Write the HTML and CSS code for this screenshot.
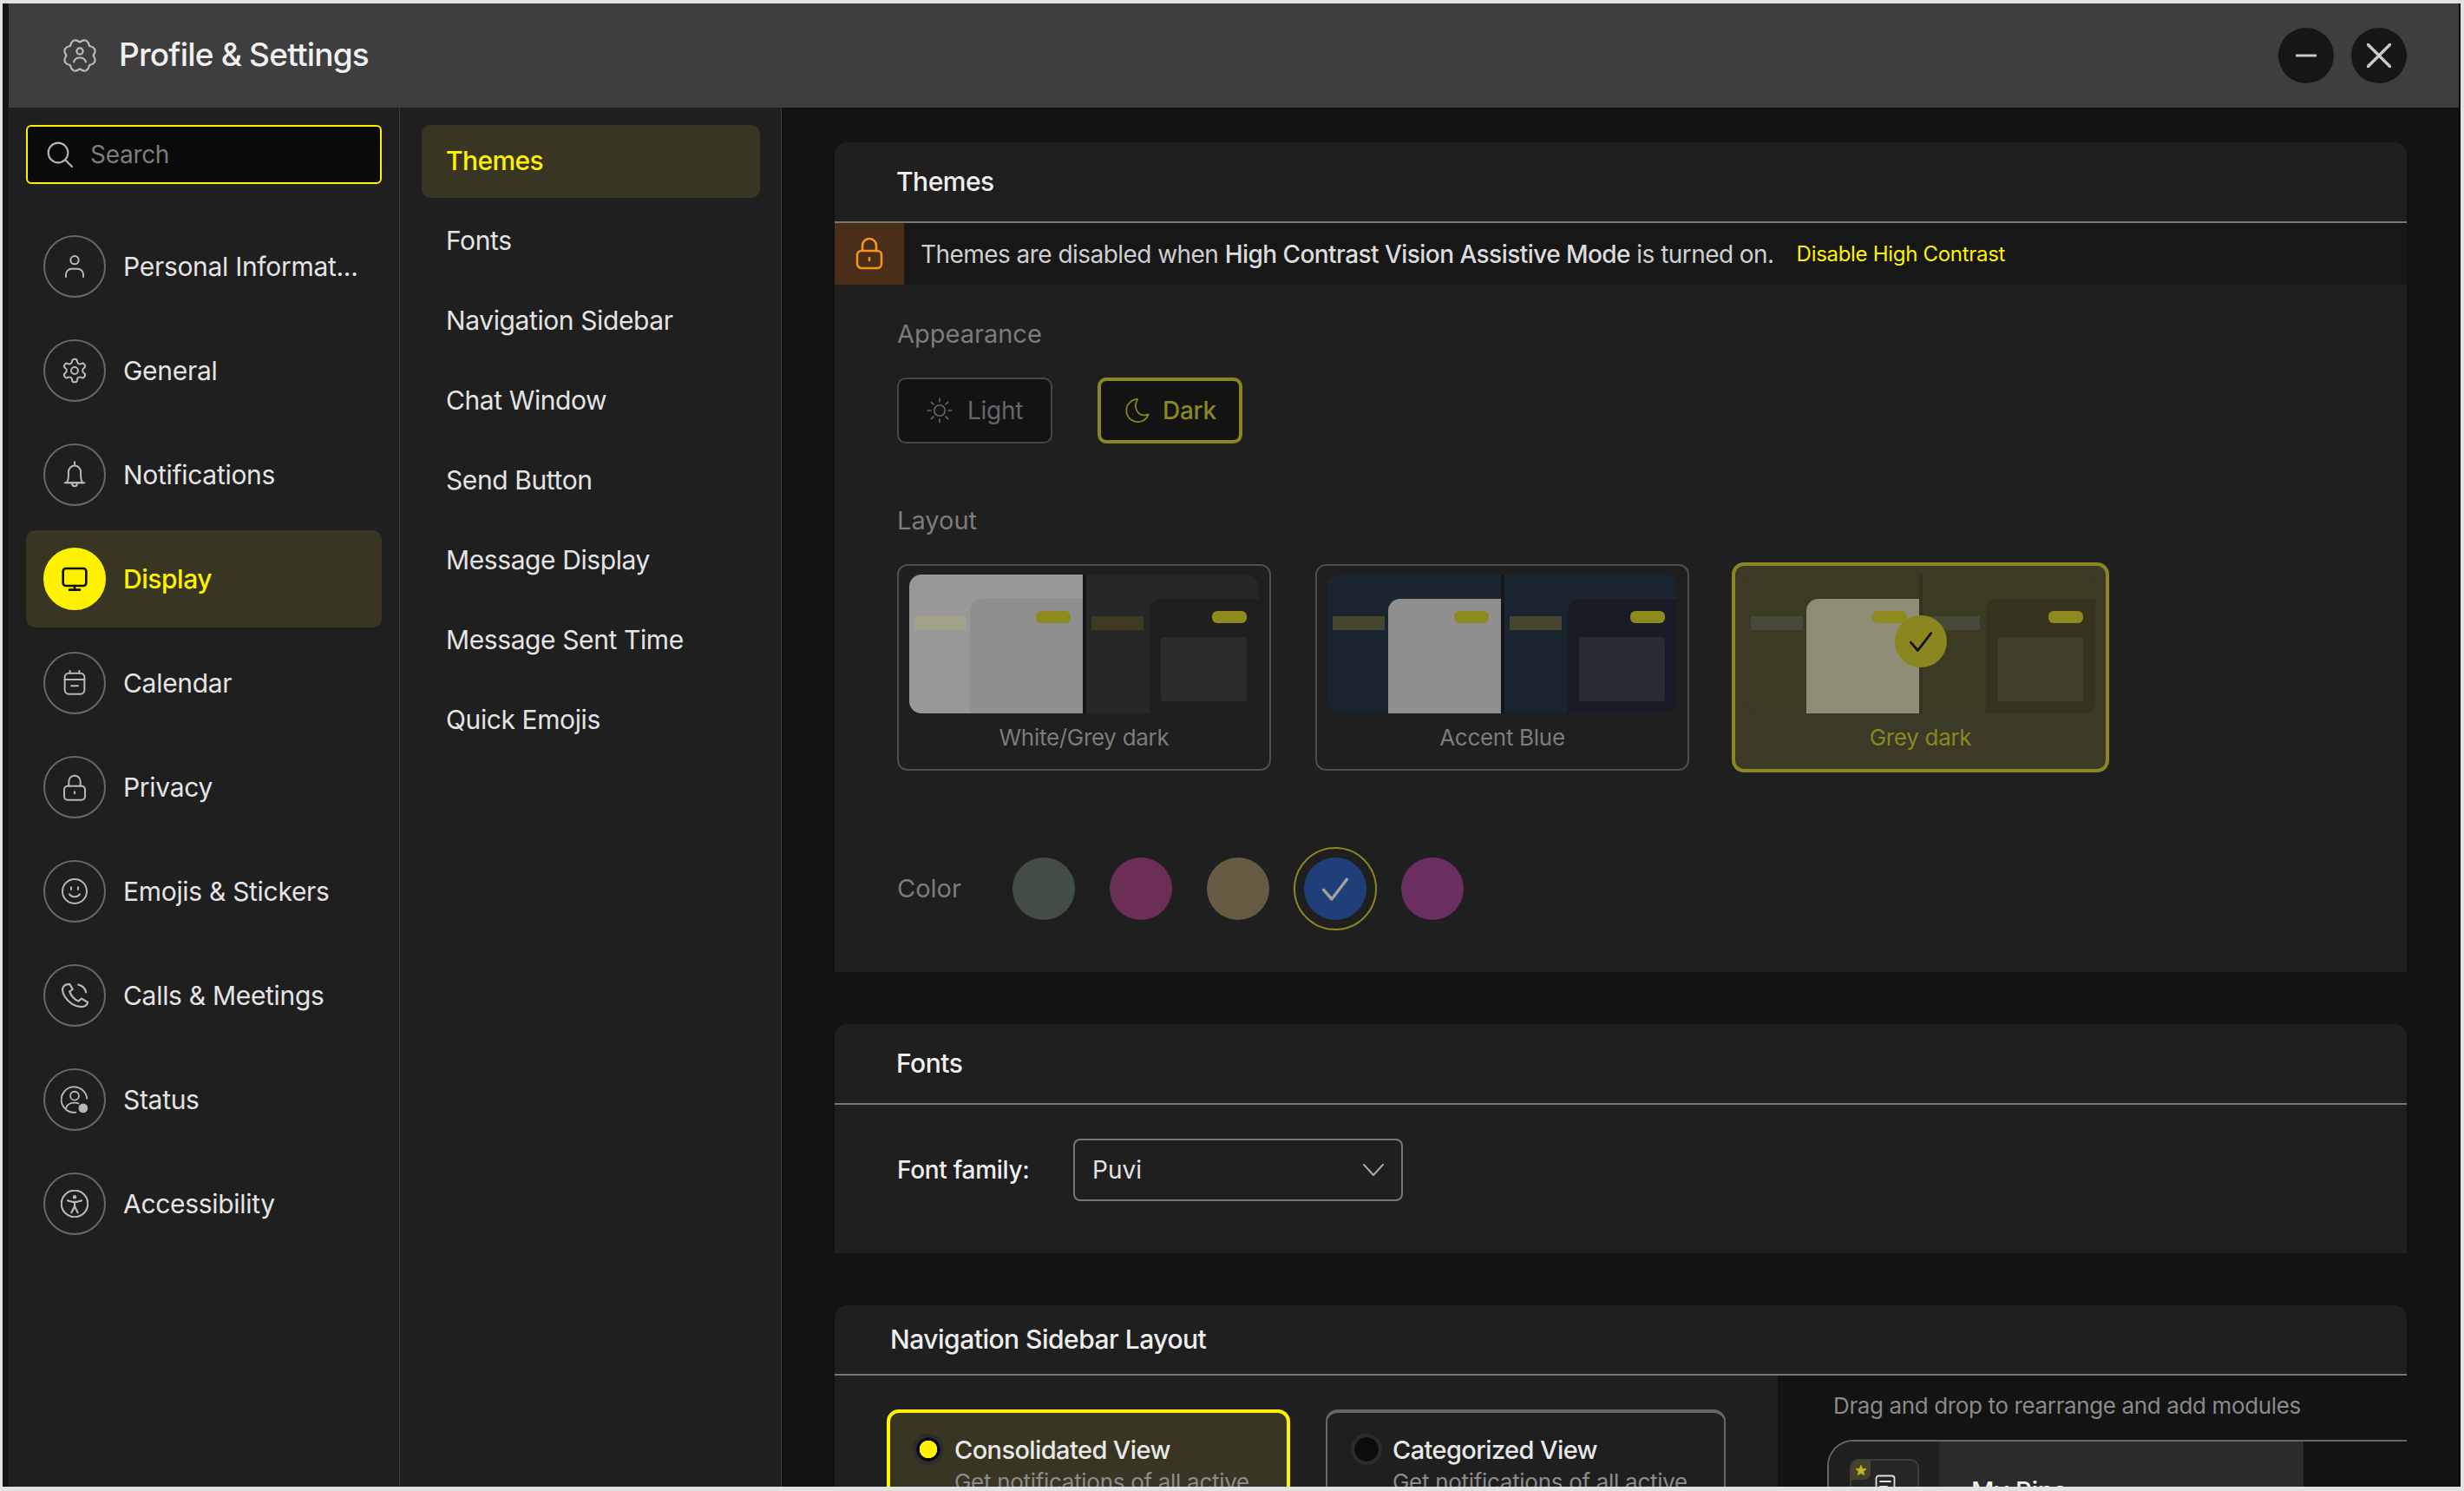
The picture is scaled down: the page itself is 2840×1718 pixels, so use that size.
FILE: index.html
```html
<!DOCTYPE html>
<html lang="en">
<head>
    <meta charset="UTF-8">
    <title>Profile &amp; Settings</title>
    <link rel="stylesheet" href="styles.css">
</head>
<body>
<div class="window">
    <header class="titlebar">
        <svg class="title-icon" viewBox="0 0 40 40"><path d="M35.5 20Q41.2 28.8 31 31Q28.8 41.2 20 35.5Q11.2 41.2 9 31Q-1.2 28.8 4.5 20Q-1.2 11.2 9 9Q11.2 -1.2 20 4.5Q28.8 -1.2 31 9Q41.2 11.2 35.5 20Z"/><circle cx="20" cy="15" r="3.6"/><path d="M13 27.5c1-3.5 4-5 7-5s6 1.5 7 5"/></svg>
        <h1>Profile &amp; Settings</h1>
        <div class="win-buttons">
            <button class="win-btn"><svg viewBox="0 0 24 24"><path d="M1 12h22"/></svg></button>
            <button class="win-btn win-close"><svg viewBox="0 0 24 24"><path d="M1 1l22 22M23 1L1 23"/></svg></button>
        </div>
    </header>
    <div class="columns">
        <aside class="sidebar">
            <div class="search">
                <svg viewBox="0 0 24 24"><circle cx="10.5" cy="10.5" r="8.5"/><path d="M17 17l5.5 5.5"/></svg>
                <span>Search</span>
            </div>
            <nav class="nav">
                <a class="nav-item"><span class="nav-circle"><svg viewBox="0 0 24 24"><circle cx="12" cy="6.5" r="3.5"/><path d="M4.5 21v-2a5 5 0 0 1 5-5h5a5 5 0 0 1 5 5v2"/></svg></span>Personal Informat...</a>
                <a class="nav-item"><span class="nav-circle"><svg viewBox="0 0 24 24"><path d="M12.22 2h-.44a2 2 0 0 0-2 2v.18a2 2 0 0 1-1 1.73l-.43.25a2 2 0 0 1-2 0l-.15-.08a2 2 0 0 0-2.73.73l-.22.38a2 2 0 0 0 .73 2.73l.15.1a2 2 0 0 1 1 1.72v.51a2 2 0 0 1-1 1.74l-.15.09a2 2 0 0 0-.73 2.73l.22.38a2 2 0 0 0 2.73.73l.15-.08a2 2 0 0 1 2 0l.43.25a2 2 0 0 1 1 1.73V20a2 2 0 0 0 2 2h.44a2 2 0 0 0 2-2v-.18a2 2 0 0 1 1-1.73l.43-.25a2 2 0 0 1 2 0l.15.08a2 2 0 0 0 2.73-.73l.22-.39a2 2 0 0 0-.73-2.73l-.15-.08a2 2 0 0 1-1-1.74v-.5a2 2 0 0 1 1-1.74l.15-.09a2 2 0 0 0 .73-2.73l-.22-.38a2 2 0 0 0-2.73-.73l-.15.08a2 2 0 0 1-2 0l-.43-.25a2 2 0 0 1-1-1.73V4a2 2 0 0 0-2-2z"/><circle cx="12" cy="12" r="3"/></svg></span>General</a>
                <a class="nav-item"><span class="nav-circle"><svg viewBox="0 0 24 24"><path d="M12 1v2.200M5 19c1-1.500 1.700-3 1.700-5.500v-4a5.300 5.300 0 0 1 10.600 0v4c0 2.500.7 4 1.700 5.500z"/><path d="M3.500 19h17M9.800 19.500c0 3.200 4.400 3.200 4.400 0"/></svg></span>Notifications</a>
                <a class="nav-item active"><span class="nav-circle"><svg viewBox="0 0 24 24"><rect x="2" y="3" width="20" height="15" rx="2.500"/><path d="M12 18v3.500M7.500 21.500h9"/></svg></span>Display</a>
                <a class="nav-item"><span class="nav-circle"><svg viewBox="0 0 24 24"><rect x="3.500" y="3.500" width="17" height="18" rx="3.500"/><path d="M3.500 9h17M9 14.500h6M8 1.500v2M16 1.500v2"/></svg></span>Calendar</a>
                <a class="nav-item"><span class="nav-circle"><svg viewBox="0 0 24 24"><rect x="3" y="11" width="18" height="12" rx="3"/><path d="M7 11V7a5 5 0 0 1 10 0v4M12 16v1.500"/></svg></span>Privacy</a>
                <a class="nav-item"><span class="nav-circle"><svg viewBox="0 0 24 24"><circle cx="12" cy="12" r="10.500"/><path d="M7.500 14.500c2 3 7 3 9 0M9 8.500v2M15 8.500v2"/></svg></span>Emojis &amp; Stickers</a>
                <a class="nav-item"><span class="nav-circle"><svg viewBox="1 1 22 22"><path d="M5 3.500C2 5 1.500 8 4 12.500c3 5 8 8.500 13 8.500 3 0 5-1.500 5.500-3.500l-5-3-2.500 2c-3-1-6-4.500-7-7.500l2.500-2L8 3z"/><path d="M15 3.500c3 .5 5.500 3 6 6"/></svg></span>Calls &amp; Meetings</a>
                <a class="nav-item"><span class="nav-circle"><svg viewBox="1 1 26 26"><path d="M25.500 13A12 12 0 1 0 15 26"/><circle cx="14" cy="10.500" r="4"/><path d="M6 22c1-3.500 4-5 8-5 1.500 0 2.500.2 3.500.6"/><circle cx="22" cy="22" r="3.600" fill="currentColor"/></svg></span>Status</a>
                <a class="nav-item"><span class="nav-circle"><svg viewBox="1 1 22 22"><circle cx="12" cy="12" r="10.500"/><circle cx="12" cy="6.700" r=".8"/><path d="M6.500 9.500l3.500 1h4l3.500-1M12 10.500v3.500M12 14l-2.500 5M12 14l2.500 5"/></svg></span>Accessibility</a>
            </nav>
        </aside>
        <aside class="subnav">
            <a class="subnav-item active">Themes</a>
            <a class="subnav-item">Fonts</a>
            <a class="subnav-item">Navigation Sidebar</a>
            <a class="subnav-item">Chat Window</a>
            <a class="subnav-item">Send Button</a>
            <a class="subnav-item">Message Display</a>
            <a class="subnav-item">Message Sent Time</a>
            <a class="subnav-item">Quick Emojis</a>
        </aside>
        <main class="content">
            <section class="panel">
                <h2 class="panel-title">Themes</h2>
                <div class="banner">
                    <span class="banner-icon"><svg viewBox="0 0 32 38"><rect x="2" y="15" width="28" height="20" rx="5"/><path d="M8 15V9a8 8 0 0 1 16 0v6M16 23v3"/></svg></span>
                    <p>Themes are disabled when <b>High Contrast Vision Assistive Mode</b> is turned on.</p>
                    <a>Disable High Contrast</a>
                </div>
                <div class="panel-body">
                    <div class="label">Appearance</div>
                    <div class="modes">
                        <button class="mode"><svg viewBox="0 0 24 24"><circle cx="12" cy="12" r="5"/><path d="M12 1v3M12 20v3M1 12h3M20 12h3M4.300 4.300l2 2M17.700 17.700l2 2M4.300 19.700l2-2M17.700 6.300l2-2"/></svg>Light</button>
                        <button class="mode selected"><svg viewBox="0 0 24 24"><path d="M13 1.500a10.500 10.500 0 1 0 10 14C14 19 8 10 13 1.500z"/></svg>Dark</button>
                    </div>
                    <div class="label layout-label">Layout</div>
                    <div class="themes">
                        <div class="theme white-grey">
                            <div class="preview">
                                <div class="half light"><span class="chip"></span><div class="pane"><span class="pill"></span></div></div>
                                <div class="half dark"><span class="chip"></span><div class="pane"><span class="pill"></span><span class="inner"></span></div></div>
                            </div>
                            <div class="theme-name">White/Grey dark</div>
                        </div>
                        <div class="theme accent-blue">
                            <div class="preview">
                                <div class="half light"><span class="chip"></span><div class="pane"><span class="pill"></span></div></div>
                                <div class="half dark"><span class="chip"></span><div class="pane"><span class="pill"></span><span class="inner"></span></div></div>
                            </div>
                            <div class="theme-name">Accent Blue</div>
                        </div>
                        <div class="theme grey-dark selected">
                            <div class="preview">
                                <div class="half light"><span class="chip"></span><div class="pane"><span class="pill"></span></div></div>
                                <div class="half dark"><span class="chip"></span><div class="pane"><span class="pill"></span><span class="inner"></span></div></div>
                            </div>
                            <div class="theme-name">Grey dark</div>
                            <span class="theme-check"><svg viewBox="0 0 24 24"><path d="M2 13l7 8L22 4"/></svg></span>
                        </div>
                    </div>
                    <div class="colors">
                        <div class="label color-label">Color</div>
                        <span class="swatch c1"></span>
                        <span class="swatch c2"></span>
                        <span class="swatch c3"></span>
                        <span class="swatch-ring"><span class="swatch c4"><svg viewBox="0 0 24 24"><path d="M2 13l7 8L22 4"/></svg></span></span>
                        <span class="swatch c5"></span>
                    </div>
                </div>
            </section>
            <section class="panel">
                <h2 class="panel-title">Fonts</h2>
                <div class="font-row">
                    <label>Font family:</label>
                    <div class="select"><span>Puvi</span><svg viewBox="0 0 24 24"><path d="M1 6l11 12L23 6"/></svg></div>
                </div>
            </section>
            <section class="panel nav-panel">
                <h2 class="panel-title">Navigation Sidebar Layout</h2>
                <div class="nav-layout">
                    <div class="nav-options">
                        <div class="option selected">
                            <div class="option-head"><span class="radio"></span>Consolidated View</div>
                            <p>Get notifications of all active</p>
                        </div>
                        <div class="option">
                            <div class="option-head"><span class="radio"></span>Categorized View</div>
                            <p>Get notifications of all active</p>
                        </div>
                    </div>
                    <div class="nav-arrange">
                        <div class="arrange-hint">Drag and drop to rearrange and add modules</div>
                        <div class="arrange-box">
                            <div class="arrange-rail">
                                <div class="module">
                                    <span class="module-star"><svg viewBox="0 0 24 24"><path d="M12 2l3 7 7.500.6-5.700 4.900 1.800 7.300L12 18l-6.600 3.800 1.800-7.300L1.500 9.600 9 9z"/></svg></span>
                                    <svg class="module-doc" viewBox="0 0 24 30"><rect x="1.500" y="1.500" width="21" height="27" rx="3"/><path d="M6 8h12M6 14h8"/></svg>
                                </div>
                            </div>
                            <div class="arrange-list">My Pins</div>
                            <div class="arrange-rest"></div>
                        </div>
                    </div>
                </div>
            </section>
        </main>
    </div>
</div>
</body>
</html>
```
FILE: styles.css
```css
* {
    box-sizing: border-box;
}
html, body {
    height: 100%;
}
body {
    margin: 0;
    background-color: #e2e2e2;
    font-family: "Inter", "Liberation Sans", sans-serif;
    color: #e6e6e6;
    overflow: hidden;
}
svg {
    fill: none;
    stroke: currentColor;
    stroke-linecap: round;
    stroke-linejoin: round;
    display: block;
}
.window {
    margin: 4px 4px 0 3px;
    height: 1709px;
    border-left: 7px solid #141414;
    border-right: 2px solid #000;
    display: flex;
    flex-direction: column;
    overflow: hidden;
    background-color: #121212;
}

/* title bar */
.titlebar {
    height: 120px;
    flex: none;
    background-color: #3e3e3e;
    display: flex;
    align-items: center;
    padding-left: 62px;
    padding-right: 60px;
}
.title-icon {
    width: 40px;
    height: 40px;
    color: #bcbcbc;
    stroke-width: 2.200;
}
h1 {
    margin: 0 0 3px 25px;
    font-size: 37px;
    font-weight: 500;
    color: #f0f0f0;
    letter-spacing: -0.8px;
}
.win-buttons {
    margin-left: auto;
    display: flex;
    gap: 20px;
}
.win-btn {
    width: 64px;
    height: 64px;
    border: none;
    padding: 0;
    border-radius: 50%;
    background-color: #161616;
    color: #c8c8c8;
    display: flex;
    align-items: center;
    justify-content: center;
}
.win-btn svg {
    width: 24px;
    height: 24px;
    stroke-width: 3;
}
.win-close svg {
    width: 28px;
    height: 28px;
}

.columns {
    flex: 1;
    display: flex;
    min-height: 0;
}

/* left sidebar */
.sidebar {
    width: 451px;
    flex: none;
    background-color: #1f1f1f;
    border-right: 1px solid #3c3c3c;
    padding: 20px 20px 0 20px;
}
.search {
    width: 410px;
    height: 68px;
    background-color: #0a0a0a;
    border: 2px solid #fff200;
    border-radius: 6px;
    display: flex;
    align-items: center;
    padding-left: 21px;
    color: #7c7c7c;
    font-size: 28px;
    letter-spacing: -0.3px;
}
.search svg {
    width: 32px;
    height: 32px;
    margin-right: 19px;
    color: #b5b5b5;
    stroke-width: 1.600;
}
.nav {
    margin-top: 39px;
    display: flex;
    flex-direction: column;
    gap: 8px;
}
.nav-item {
    width: 410px;
    height: 112px;
    flex: none;
    display: flex;
    align-items: center;
    padding-left: 20px;
    border-radius: 10px;
    font-size: 30px;
    letter-spacing: -0.3px;
    color: #e4e4e4;
    white-space: nowrap;
}
.nav-circle {
    width: 72px;
    height: 72px;
    flex: none;
    border-radius: 50%;
    border: 2px solid #686868;
    margin-right: 20px;
    display: flex;
    align-items: center;
    justify-content: center;
    color: #b8b8b8;
}
.nav-circle svg {
    width: 32px;
    height: 32px;
    stroke-width: 1.500;
}
.nav-item.active {
    background-color: #383622;
    color: #fff200;
    font-weight: 500;
    letter-spacing: -0.45px;
}
.nav-item.active .nav-circle {
    background-color: #fff200;
    border-color: #fff200;
    color: #111;
}
.nav-item.active .nav-circle svg {
    stroke-width: 2;
}

/* second column */
.subnav {
    width: 440px;
    flex: none;
    background-color: #1f1f1f;
    border-right: 1px solid #3c3c3c;
    padding: 20px 24px 0 25px;
    display: flex;
    flex-direction: column;
}
.subnav-item {
    height: 92px;
    flex: none;
    display: flex;
    align-items: center;
    padding-left: 28px;
    padding-bottom: 2px;
    font-size: 30px;
    letter-spacing: -0.4px;
    color: #e4e4e4;
}
.subnav-item.active {
    height: 84px;
    margin-bottom: 4px;
    background-color: #383622;
    color: #fff200;
    font-weight: 500;
    letter-spacing: -0.6px;
    border-radius: 10px;
}

/* main */
.content {
    flex: 1;
    min-width: 0;
    padding: 40px 60px 0 61px;
    display: flex;
    flex-direction: column;
    gap: 60px;
}
.panel {
    flex: none;
    background-color: #1f1f1f;
    border-radius: 14px 14px 0 0;
}
.panel-title {
    margin: 0;
    height: 93px;
    padding-left: 71px;
    padding-bottom: 2px;
    display: flex;
    align-items: center;
    font-size: 30px;
    font-weight: 500;
    color: #f0f0f0;
    letter-spacing: -0.5px;
    border-bottom: 2px solid #777;
}
.banner {
    height: 71px;
    background-color: #171717;
    display: flex;
    align-items: center;
    font-size: 28px;
    letter-spacing: -0.55px;
    color: #cfcfcf;
}
.banner-icon {
    width: 80px;
    height: 100%;
    background-color: #4a2e1a;
    display: flex;
    align-items: center;
    justify-content: center;
    margin-right: 19px;
    color: #f7941e;
}
.banner-icon svg {
    width: 32px;
    height: 38px;
    stroke-width: 2.600;
}
.banner p {
    margin: 0;
}
.banner b {
    font-weight: 500;
    color: #dcdcdc;
}
.banner a {
    margin-left: 26px;
    font-size: 24px;
    letter-spacing: -0.3px;
    color: #fff200;
}
.panel-body {
    padding: 37px 72px 48px;
}
.label {
    height: 40px;
    line-height: 40px;
    font-size: 29px;
    color: #7c7c7c;
}
.modes {
    margin-top: 30px;
    display: flex;
    gap: 52px;
}
.mode {
    height: 76px;
    padding: 0 32px;
    background-color: #131313;
    border: 2px solid #434a43;
    border-radius: 10px;
    font-family: inherit;
    font-size: 28px;
    letter-spacing: -0.3px;
    color: #66666c;
    display: flex;
    align-items: center;
    gap: 17px;
}
.mode svg {
    width: 30px;
    height: 30px;
    stroke-width: 1.300;
}
.mode.selected {
    border: 4px solid #8a8720;
    color: #8a8720;
    font-weight: 500;
    padding: 0 26px;
    gap: 15px;
}
.layout-label {
    margin-top: 69px;
}
.themes {
    margin-top: 30px;
    display: flex;
    gap: 51px;
}
.theme {
    position: relative;
    width: 431px;
    height: 238px;
    border: 2px solid #4a504a;
    border-radius: 12px;
    padding: 10px 12px 0;
    background-color: #1f1f1f;
}
.preview {
    height: 160px;
    display: flex;
    gap: 4px;
    border-radius: 14px;
    overflow: hidden;
    background-color: #161616;
}
.half {
    flex: 1;
    display: flex;
    padding-top: 28px;
}
.chip {
    width: 60px;
    height: 16px;
    margin: 20px 0 0 6px;
    flex: none;
}
.half.light .pane {
    margin-left: 4px;
    flex: 1;
    border-radius: 14px 0 0 0;
    padding: 14px 14px 0 0;
    display: flex;
    flex-direction: column;
    align-items: flex-end;
}
.half.dark .pane {
    margin-left: 7px;
    flex: 1;
    border-radius: 14px 0 0 0;
    padding: 14px 14px 0 13px;
    display: flex;
    flex-direction: column;
    align-items: flex-end;
}
.pill {
    width: 40px;
    height: 14px;
    border-radius: 6px;
    background-color: #8d8a1f;
    flex: none;
}
.inner {
    align-self: stretch;
    height: 74px;
    margin-top: 16px;
    border-radius: 3px;
}
.theme-name {
    margin-top: 12px;
    text-align: center;
    font-size: 26px;
    color: #7c7c7c;
    letter-spacing: -0.3px;
}

.white-grey .half.light { background-color: #989898; }
.white-grey .half.light .chip { background-color: #a3a18a; }
.white-grey .half.light .pane { background-color: #8f8f8f; }
.white-grey .half.dark { background-color: #272727; }
.white-grey .half.dark .chip { background-color: #3e3b22; }
.white-grey .half.dark .pane { background-color: #1f1f1f; }
.white-grey .half.dark .inner { background-color: #2a2b2d; }

.accent-blue .half { background-color: #1b2530; }
.accent-blue .chip { background-color: #45452f; }
.accent-blue .half.light .pane { background-color: #8f8f8f; }
.accent-blue .half.dark .pane { background-color: #171c26; }
.accent-blue .half.dark .inner { background-color: #262b33; }

.theme.selected {
    background-color: #3b3a26;
    border-color: #8a8720;
    box-shadow: 0 0 0 2px #8a8720;
}
.grey-dark .preview { background-color: #34331f; }
.grey-dark .half { background-color: #3b3a22; }
.grey-dark .chip { background-color: #46483a; }
.grey-dark .half.light .pane { background-color: #8e8d75; }
.grey-dark .half.dark .pane { background-color: #35341f; }
.grey-dark .half.dark .inner { background-color: #403f2a; }
.grey-dark .theme-name { color: #8a8720; }
.theme-check {
    position: absolute;
    left: 184px;
    top: 57px;
    width: 60px;
    height: 60px;
    border-radius: 50%;
    background-color: #8a8720;
    color: #111;
    display: flex;
    align-items: center;
    justify-content: center;
}
.theme-check svg {
    width: 28px;
    height: 28px;
    stroke-width: 2.400;
}

.colors {
    margin-top: 88px;
    display: flex;
    align-items: center;
    gap: 40px;
    height: 96px;
}
.color-label {
    width: 93px;
}
.swatch {
    width: 72px;
    height: 72px;
    border-radius: 50%;
    flex: none;
    display: flex;
    align-items: center;
    justify-content: center;
}
.swatch-ring {
    width: 96px;
    height: 96px;
    margin: 0 -12px;
    border: 2px solid #8a8720;
    border-radius: 50%;
    display: flex;
    align-items: center;
    justify-content: center;
}
.c1 { background-color: #434d43; }
.c2 { background-color: #6b2f55; }
.c3 { background-color: #665c43; }
.c4 { background-color: #203e78; color: #a0a0a0; }
.c5 { background-color: #6b2f62; }
.swatch svg {
    width: 32px;
    height: 32px;
    stroke-width: 2.600;
}

/* fonts */
.font-row {
    padding: 39px 72px 60px;
    display: flex;
    align-items: center;
}
.font-row label {
    width: 203px;
    font-size: 28px;
    font-weight: 500;
    color: #eee;
    letter-spacing: -0.3px;
}
.select {
    width: 380px;
    height: 72px;
    border: 2px solid #777;
    border-radius: 8px;
    display: flex;
    align-items: center;
    justify-content: space-between;
    padding: 0 20px;
    font-size: 28px;
    color: #e4e4e4;
}
.select svg {
    width: 24px;
    height: 24px;
    color: #a8a8a8;
    stroke-width: 2;
}

/* navigation sidebar layout */
.nav-panel .panel-title {
    height: 81px;
    padding-left: 64px;
    color: #eee;
}
.nav-layout {
    display: flex;
    height: 200px;
}
.nav-options {
    width: 1087px;
    flex: none;
    padding: 39px 0 0 63px;
    display: flex;
    gap: 42px;
}
.option {
    width: 461px;
    height: 140px;
    border: 2px solid #666;
    border-top-width: 4px;
    border-radius: 14px;
    padding: 24px 24px 0 27px;
    flex: none;
}
.option.selected {
    width: 465px;
    margin: 0 -1px 0 -3px;
    background-color: #383622;
    border: 4px solid #fff200;
    padding-left: 26px;
}
.option-head {
    display: flex;
    align-items: center;
    font-size: 29px;
    font-weight: 500;
    color: #e8e8e8;
    letter-spacing: -0.6px;
}
.radio {
    width: 36px;
    height: 36px;
    border-radius: 50%;
    background: radial-gradient(circle, #0c0c0c 13.5px, #2c2c2c 14px);
    margin-right: 12px;
    flex: none;
}
.option.selected .radio {
    background: radial-gradient(circle, #fff200 10px, #0c0c0c 10.5px, #0c0c0c 13.5px, #2c2c2c 14px);
}
.option p {
    margin: 4px 0 0 48px;
    font-size: 26px;
    letter-spacing: -0.3px;
    color: #8c8c8c;
    white-space: nowrap;
}
.nav-arrange {
    flex: 1;
    min-width: 0;
    background-color: #131313;
    padding: 15px 0 0 64px;
}
.arrange-hint {
    height: 40px;
    line-height: 40px;
    font-size: 26px;
    color: #8a8a8a;
    letter-spacing: -0.37px;
}
.arrange-box {
    margin: 19px 0 0 -7px;
    height: 120px;
    border: 2px solid #666;
    border-right: none;
    border-bottom: none;
    border-radius: 30px 0 0 0;
    display: flex;
    overflow: hidden;
}
.arrange-rail {
    width: 127px;
    background-color: #1f1f1f;
    padding: 20px 0 0 24px;
}
.module {
    width: 80px;
    height: 80px;
    border: 2px solid #3e3e3e;
    border-radius: 10px;
    overflow: hidden;
    background-color: #262626;
}
.module-star {
    display: flex;
    align-items: center;
    justify-content: center;
    width: 22px;
    height: 22px;
    background-color: #45442a;
    border-radius: 0 0 8px 0;
    color: #bdb922;
}
.module-star svg {
    width: 14px;
    height: 14px;
    fill: currentColor;
}
.module-doc {
    width: 24px;
    height: 30px;
    margin: -6px 0 0 27px;
    color: #e0e0e0;
    stroke-width: 1.800;
}
.arrange-list {
    width: 420px;
    background-color: #2a2b2a;
    padding: 37px 0 0 37px;
    font-size: 29px;
    font-weight: 500;
    color: #f0f0f0;
    line-height: 40px;
}
.arrange-rest {
    flex: 1;
    background-color: #121212;
}
```
